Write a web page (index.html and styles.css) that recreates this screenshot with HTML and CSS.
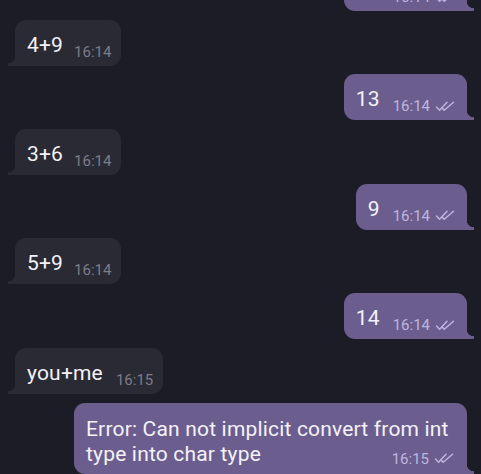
FILE: index.html
```html
<!DOCTYPE html>
<html>
<head>
<meta charset="utf-8">
<link rel="stylesheet" href="styles.css">
</head>
<body>
<div class="chat">
  <div class="bubble out first"><span class="text">12</span><span class="meta">16:14 <svg class="ticks" viewBox="0 0 20 11"><path d="M1.5 6 L4.6 9.2 L12 1.2 M9.2 9.2 L18.5 1.2 M7.4 7.4 L9.2 9.2" /></svg></span></div>
  <div class="bubble in"><span class="text">4+9</span><span class="meta">16:14</span></div>
  <div class="bubble out"><span class="text">13</span><span class="meta">16:14 <svg class="ticks" viewBox="0 0 20 11"><path d="M1.5 6 L4.6 9.2 L12 1.2 M9.2 9.2 L18.5 1.2 M7.4 7.4 L9.2 9.2" /></svg></span></div>
  <div class="bubble in"><span class="text">3+6</span><span class="meta">16:14</span></div>
  <div class="bubble out"><span class="text">9</span><span class="meta">16:14 <svg class="ticks" viewBox="0 0 20 11"><path d="M1.5 6 L4.6 9.2 L12 1.2 M9.2 9.2 L18.5 1.2 M7.4 7.4 L9.2 9.2" /></svg></span></div>
  <div class="bubble in"><span class="text">5+9</span><span class="meta">16:14</span></div>
  <div class="bubble out"><span class="text">14</span><span class="meta">16:14 <svg class="ticks" viewBox="0 0 20 11"><path d="M1.5 6 L4.6 9.2 L12 1.2 M9.2 9.2 L18.5 1.2 M7.4 7.4 L9.2 9.2" /></svg></span></div>
  <div class="bubble in short"><span class="text">you+me</span><span class="meta">16:15</span></div>
  <div class="bubble out long"><div class="text">Error: Can not implicit convert from int type into char type<span class="meta">16:15 <svg class="ticks" viewBox="0 0 20 11"><path d="M1.5 6 L4.6 9.2 L12 1.2 M9.2 9.2 L18.5 1.2 M7.4 7.4 L9.2 9.2" /></svg></span></div></div>
</div>
</body>
</html>
```
FILE: styles.css
```css
html, body {
  margin: 0;
  padding: 0;
  background: #1c1c26;
  overflow: hidden;
}
body {
  width: 481px;
  height: 474px;
  font-family: Roboto, "Noto Sans", sans-serif;
}
.chat {
  display: flex;
  flex-direction: column;
  gap: 8.7px;
  padding: 0 14px 0 15px;
}
.bubble {
  position: relative;
  display: flex;
  align-items: flex-end;
  padding: 13px 10px 5px 12px;
  border-radius: 11px;
  color: #f4f2f8;
}
.bubble .text {
  font-size: 21px;
  letter-spacing: 0.18px;
  line-height: 25px;
  margin-bottom: 3px;
  white-space: nowrap;
}
.bubble .meta {
  display: flex;
  align-items: center;
  font-size: 15px;
  letter-spacing: 0;
  line-height: 18px;
  margin-left: 11px;
  white-space: nowrap;
}
.bubble.in {
  align-self: flex-start;
  background: #2a2a34;
  border-bottom-left-radius: 0;
}
.bubble.in .meta { color: #7d7c88; }
.bubble.out {
  align-self: flex-end;
  background: #6b5e8f;
  border-bottom-right-radius: 0;
  padding-right: 12px;
}
.bubble.out .meta { color: #bfb5de; margin-left: 13px; }
.bubble.in::before {
  content: "";
  position: absolute;
  left: -7px;
  bottom: 0;
  width: 7px;
  height: 10px;
  background: radial-gradient(circle at 0 0, transparent 7px, #2a2a34 7.6px);
}
.bubble.out::after {
  content: "";
  position: absolute;
  right: -7px;
  bottom: 0;
  width: 7px;
  height: 10px;
  background: radial-gradient(circle at 100% 0, transparent 7px, #6b5e8f 7.6px);
}
.ticks {
  width: 20px;
  height: 11px;
  margin-left: 5px;
  fill: none;
  stroke: currentColor;
  stroke-width: 1.5;
  stroke-linecap: round;
  stroke-linejoin: round;
}
.first { margin-top: -35px; }
.bubble.short .meta { margin-left: 13px; }
.bubble.long {
  display: block;
  width: 368px;
  padding: 14px 13px 6px 12px;
}
.bubble.long .text {
  white-space: normal;
  margin-bottom: 0;
}
.bubble.long .meta {
  float: right;
  margin-top: 8px;
  margin-left: 0;
}
```
